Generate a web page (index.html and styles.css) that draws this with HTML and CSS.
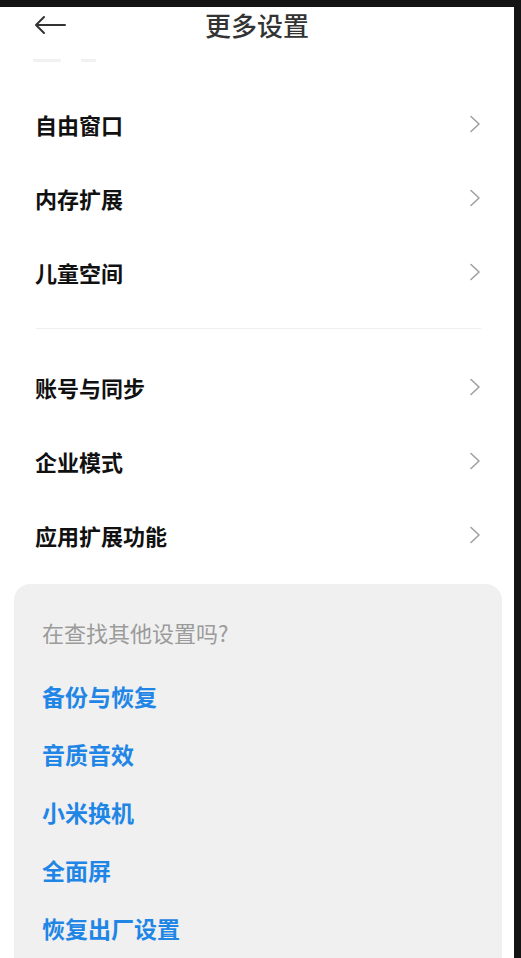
FILE: index.html
```html
<!DOCTYPE html>
<html lang="zh-CN">
<head>
<meta charset="utf-8">
<title>更多设置</title>
<link rel="stylesheet" href="styles.css">
</head>
<body>
<div class="page">
  <header class="header">
    <div class="back">
      <svg width="32" height="20" viewBox="0 0 32 20" aria-hidden="true">
        <path d="M31 10 H2 M10 2 L2 10 L10 18" fill="none" stroke="#333" stroke-width="2" stroke-linecap="round" stroke-linejoin="round"/>
      </svg>
    </div>
    <h1 class="title">更多设置</h1>
    <div></div>
  </header>
  <div class="ghost" aria-hidden="true"><i class="g1"></i><i class="g2"></i></div>

  <ul class="list">
    <li class="row"><span>自由窗口</span><svg class="chev" width="12" height="18" viewBox="0 0 12 18"><path d="M2 1.5 L10 9 L2 16.5" fill="none" stroke="#a0a0a0" stroke-width="1.6" stroke-linecap="round" stroke-linejoin="round"/></svg></li>
    <li class="row"><span>内存扩展</span><svg class="chev" width="12" height="18" viewBox="0 0 12 18"><path d="M2 1.5 L10 9 L2 16.5" fill="none" stroke="#a0a0a0" stroke-width="1.6" stroke-linecap="round" stroke-linejoin="round"/></svg></li>
    <li class="row"><span>儿童空间</span><svg class="chev" width="12" height="18" viewBox="0 0 12 18"><path d="M2 1.5 L10 9 L2 16.5" fill="none" stroke="#a0a0a0" stroke-width="1.6" stroke-linecap="round" stroke-linejoin="round"/></svg></li>
  </ul>
  <div class="divider"></div>
  <ul class="list">
    <li class="row"><span>账号与同步</span><svg class="chev" width="12" height="18" viewBox="0 0 12 18"><path d="M2 1.5 L10 9 L2 16.5" fill="none" stroke="#a0a0a0" stroke-width="1.6" stroke-linecap="round" stroke-linejoin="round"/></svg></li>
    <li class="row"><span>企业模式</span><svg class="chev" width="12" height="18" viewBox="0 0 12 18"><path d="M2 1.5 L10 9 L2 16.5" fill="none" stroke="#a0a0a0" stroke-width="1.6" stroke-linecap="round" stroke-linejoin="round"/></svg></li>
    <li class="row"><span>应用扩展功能</span><svg class="chev" width="12" height="18" viewBox="0 0 12 18"><path d="M2 1.5 L10 9 L2 16.5" fill="none" stroke="#a0a0a0" stroke-width="1.6" stroke-linecap="round" stroke-linejoin="round"/></svg></li>
  </ul>

  <section class="card">
    <p class="card-title">在查找其他设置吗?</p>
    <ul class="links">
      <li>备份与恢复</li>
      <li>音质音效</li>
      <li>小米换机</li>
      <li>全面屏</li>
      <li>恢复出厂设置</li>
    </ul>
  </section>
</div>
</body>
</html>
```

FILE: styles.css
```css
* { box-sizing: border-box; }
html, body {
  margin: 0;
  padding: 0;
  background: #141414;
  height: 100%;
}
body {
  font-family: "Noto Sans CJK SC", "Noto Sans", sans-serif;
  padding-top: 7px;
  overflow: hidden;
}
.page {
  width: 514px;
  height: 951px;
  background: #ffffff;
  overflow: hidden;
}
.header {
  height: 36px;
  display: grid;
  grid-template-columns: 1fr auto 1fr;
  align-items: center;
}
.back {
  padding-left: 34px;
  display: flex;
  align-items: center;
}
.back svg { display: block; }
.title {
  margin: 0;
  font-size: 26px;
  font-weight: 500;
  color: #333333;
  line-height: 36px;
}
.ghost {
  height: 6px;
  margin-top: 14px;
  margin-bottom: 24px;
  padding-left: 33px;
  display: flex;
  gap: 20px;
  align-items: center;
}
.ghost i {
  display: block;
  height: 3px;
  background: #f1f1f1;
  border-radius: 1px;
}
.ghost .g1 { width: 28px; }
.ghost .g2 { width: 15px; }
.list {
  list-style: none;
  margin: 0;
  padding: 0;
}
.row {
  height: 74px;
  display: flex;
  align-items: center;
  justify-content: space-between;
  padding: 0 33px 0 35px;
  font-size: 22px;
  font-weight: 700;
  color: #111111;
}
.chev { display: block; }
.divider {
  height: 1px;
  background: #efefef;
  margin: 19px 33px 21px 36px;
}
.card {
  margin: 12px 12px 0 14px;
  background: #f0f0f0;
  border-radius: 16px;
  padding: 33px 20px 0 28px;
  height: 400px;
}
.card-title {
  margin: 0 0 20px;
  font-size: 22px;
  line-height: 30px;
  color: #9b9b9b;
  font-weight: 400;
}
.links {
  list-style: none;
  margin: 0;
  padding: 0;
}
.links li {
  height: 58px;
  display: flex;
  align-items: center;
  font-size: 23px;
  font-weight: 700;
  color: #1f86e6;
}
```
